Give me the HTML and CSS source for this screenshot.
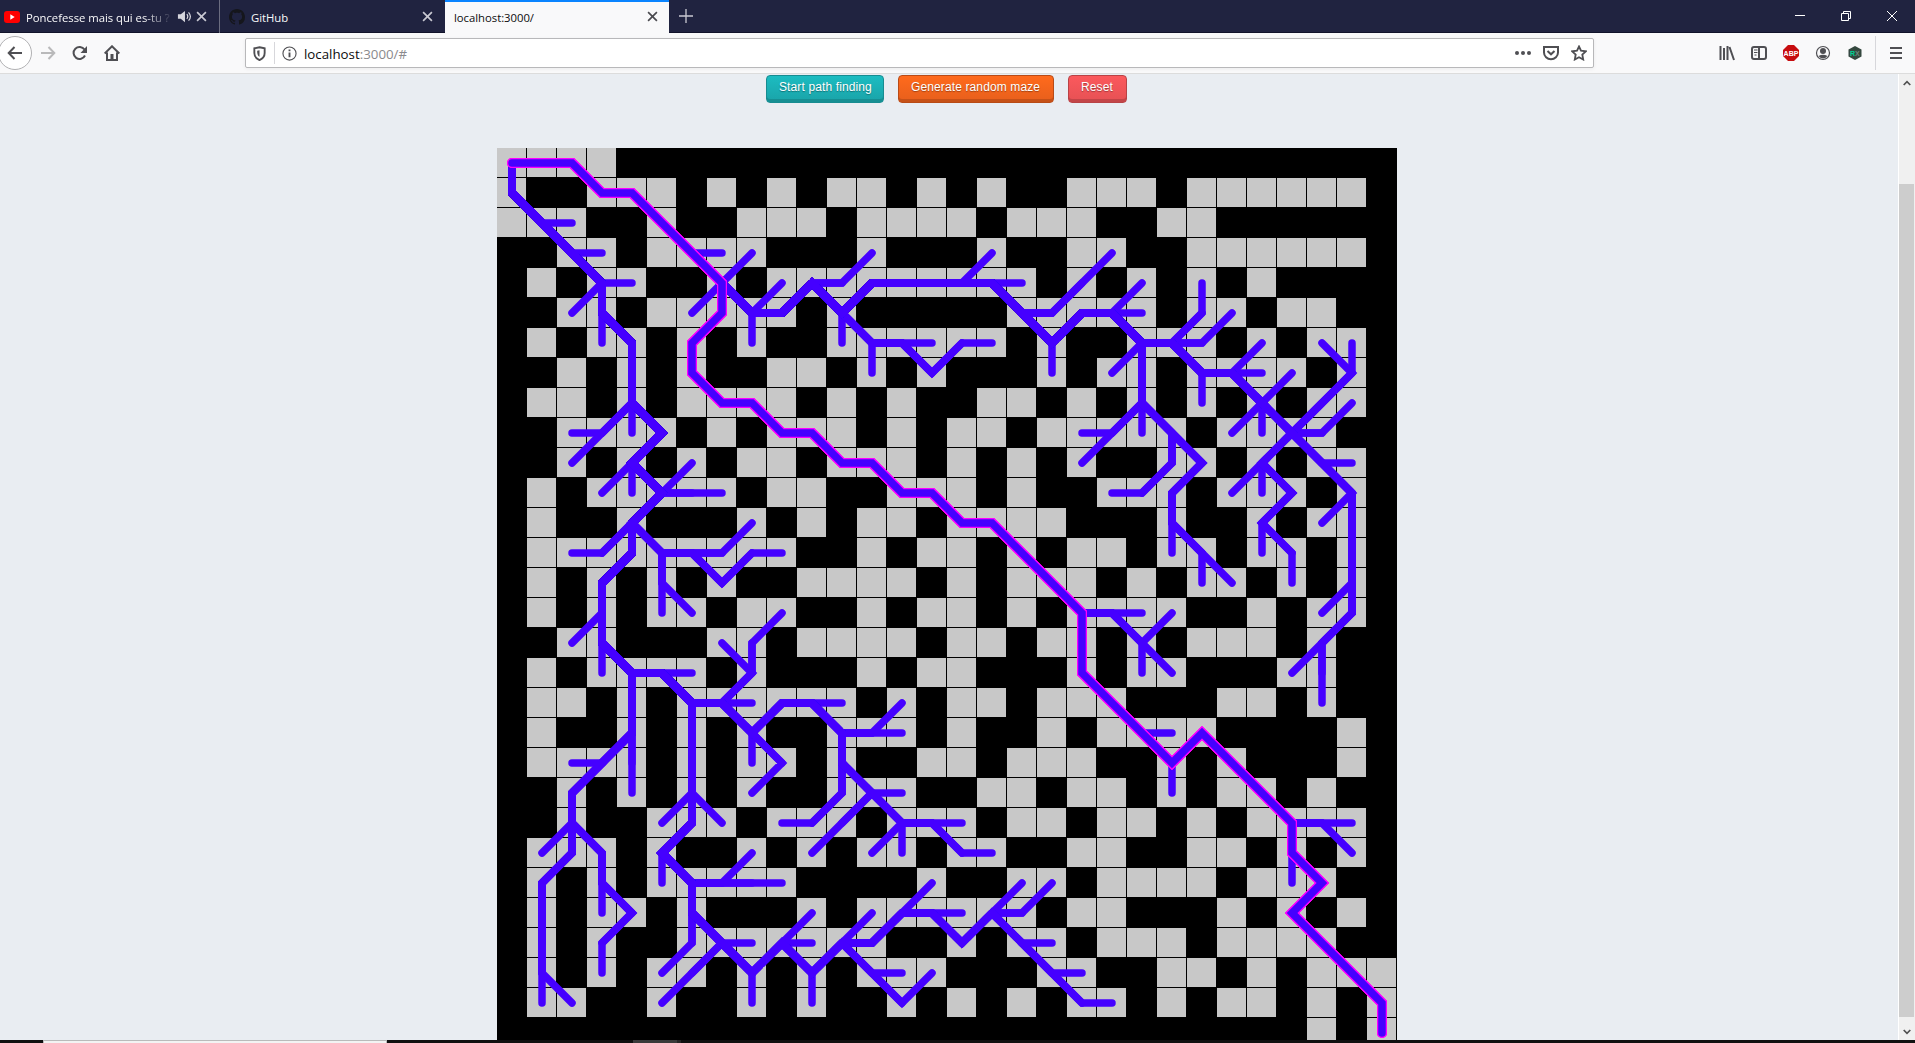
FILE: index.html
```html
<!DOCTYPE html>
<html lang="en">
<head>
<meta charset="utf-8">
<title>localhost:3000/</title>
<link rel="stylesheet" href="styles.css">
</head>
<body>
<header class="tabs">
  <div class="tab tab-first">
    <svg class="fav" viewBox="0 0 16 16"><rect y="2" width="16" height="12" rx="3" fill="#f00"/><path d="M6.3 5.2v5.6l4.4-2.8z" fill="#fff"/></svg>
    <span class="title fade">Poncefesse mais qui es-tu ?</span>
    <svg class="sound" viewBox="0 0 16 16"><path d="M1 5.5h3L8.500 2v12L4 10.500H1z" fill="#d5d5dc"/><path d="M10.500 5.500q2 2.500 0 5M12.300 3.500q4 4.500 0 9" fill="none" stroke="#d5d5dc" stroke-width="1.300"/></svg>
    <svg class="close" viewBox="0 0 10 10"><path d="M1 1l8 8M9 1l-8 8"/></svg>
  </div>
  <div class="tab tab-github">
    <svg class="fav" viewBox="0 0 16 16"><path fill="#15161c" d="M8 0C3.580 0 0 3.580 0 8c0 3.540 2.290 6.530 5.470 7.590.4.070.55-.17.55-.38 0-.19-.01-.82-.01-1.490-2.010.37-2.530-.49-2.690-.94-.09-.23-.48-.94-.82-1.130-.28-.15-.68-.52-.01-.53.63-.01 1.080.58 1.230.82.72 1.210 1.870.87 2.330.66.070-.52.28-.87.51-1.070-1.780-.2-3.640-.89-3.640-3.950 0-.87.31-1.590.82-2.150-.08-.2-.36-1.020.08-2.120 0 0 .67-.21 2.200.82.64-.18 1.320-.27 2-.27s1.360.09 2 .27c1.530-1.040 2.200-.82 2.200-.82.44 1.100.16 1.920.08 2.120.51.56.82 1.270.82 2.150 0 3.070-1.870 3.750-3.650 3.950.29.25.54.73.54 1.480 0 1.070-.01 1.930-.01 2.200 0 .21.15.46.55.38A8.010 8.010 0 0 0 16 8c0-4.420-3.580-8-8-8z"/></svg>
    <span class="title">GitHub</span>
    <svg class="close" viewBox="0 0 10 10"><path d="M1 1l8 8M9 1l-8 8"/></svg>
  </div>
  <div class="tab tab-active">
    <span class="title">localhost:3000/</span>
    <svg class="close" viewBox="0 0 10 10"><path d="M1 1l8 8M9 1l-8 8"/></svg>
  </div>
  <svg class="plus" viewBox="0 0 14 14"><path d="M7 0v14M0 7h14"/></svg>
  <div class="window-controls">
    <svg viewBox="0 0 10 10"><path d="M0 4.500h10"/></svg>
    <svg viewBox="0 0 10 10"><path d="M.5 2.500h7v7h-7zM2.500 2.500v-2h7v7h-2"/></svg>
    <svg viewBox="0 0 10 10"><path d="M0 0l10 10M10 0L0 10"/></svg>
  </div>
</header>

<nav class="toolbar">
  <div class="nav-buttons">
    <span class="back"><svg viewBox="0 0 16 16"><path d="M15 8H2M7.500 2L1.700 8l5.800 6"/></svg></span>
    <svg class="forward" viewBox="0 0 16 16"><path d="M1 8h13M8.500 2l5.800 6-5.800 6"/></svg>
    <svg viewBox="0 0 16 16"><path d="M13 10.500A6 6 0 1 1 12.500 4.500"/><path class="solid" d="M15 1v7H8.500z"/></svg>
    <svg viewBox="0 0 16 16"><path d="M.7 8.500L8 1.300l7.300 7.200M3 7.500V14.900h10V7.500"/><path class="solid" d="M6.500 9h3v6h-3z"/></svg>
  </div>
  <div class="urlbar">
    <svg class="shield" viewBox="0 0 16 16"><path d="M8 1.300L13.500 2.500v5c0 4-2 6-5.500 7.500-3.500-1.500-5.500-3.500-5.500-7.500v-5z"/><path d="M8 4.500v7c-2-1.200-2.500-3-2.500-6.500z" class="solid"/></svg>
    <i class="divider"></i>
    <svg class="info" viewBox="0 0 16 16"><circle cx="8" cy="8" r="7"/><path d="M8 7v5M8 3.800v1.800" stroke-width="2"/></svg>
    <span class="url">localhost<span>:3000/#</span></span>
    <svg class="dots" viewBox="0 0 16 16"><g class="solid"><circle cx="2" cy="8" r="2"/><circle cx="8" cy="8" r="2"/><circle cx="14" cy="8" r="2"/></g></svg>
    <svg class="pocket" viewBox="0 0 16 16"><path d="M1 2h14v5.500a7 6.700 0 0 1-14 0zM4.500 6L8 9.300 11.500 6" stroke-width="2"/></svg>
    <svg class="star" viewBox="0 0 16 16"><path stroke-width="1.800" d="M8 1.500l2 4.200 4.800.6-3.500 3.200.9 5L8 12.200l-4.200 2.300.9-5L1.200 6.300 6 5.700z"/></svg>
  </div>
  <div class="extensions">
    <svg viewBox="0 0 16 16"><path stroke-width="2" d="M1.500 1v14M5 3v12M8.500 1v14M10.500 2l4.500 13"/></svg>
    <svg viewBox="0 0 16 16"><rect x="1" y="2" width="14" height="12" rx="2" stroke-width="2"/><path d="M8 2v12"/><path stroke-width="1" d="M3 5h3.500M3 7.500h3.500M3.500 10h2"/></svg>
    <svg viewBox="0 0 16 16"><path fill="#c70d0f" stroke="none" d="M5 0h6l5 5v6l-5 5H5l-5-5V5z"/><text class="abp" x="8" y="10.700">ABP</text></svg>
    <svg viewBox="0 0 16 16"><circle cx="8" cy="8" r="6.500" stroke-width="1.200"/><circle class="solid" cx="8" cy="6" r="3"/><path class="solid" d="M3.500 11q4.500-2.500 9 0-4.500 5-9 0z"/></svg>
    <svg viewBox="0 0 16 16"><path fill="#35483f" stroke="none" d="M8 1l6.500 3.500v7L8 15l-6.500-3.500v-7z"/><text class="rx" x="7.800" y="10.500"><tspan fill="#00d596">R</tspan><tspan fill="#6c8a7e">X</tspan></text></svg>
  </div>
  <svg class="menu" viewBox="0 0 16 16"><path d="M2 3h12M2 8h12M2 13h12"/></svg>
</nav>

<div class="viewport">
  <main class="page">
    <div class="actions">
      <a class="btn teal">Start path finding</a>
      <a class="btn orange">Generate random maze</a>
      <a class="btn red">Reset</a>
    </div>
    <svg class="maze" id="maze" width="900" height="892" viewBox="0 0 900 892"></svg>
  </main>
  <aside class="scrollbar">
    <svg viewBox="0 0 8 6"><path d="M.7 5L4 1.700 7.300 5"/></svg>
    <div class="thumb"></div>
    <svg viewBox="0 0 8 6"><path d="M.7 1L4 4.300 7.300 1"/></svg>
  </aside>
</div>
<footer class="taskbar"><i class="search"></i><i class="app"></i></footer>
<script src="maze.js"></script>
</body>
</html>
```
FILE: styles.css
```css
* { box-sizing: border-box; }
body {
  margin: 0;
  height: 1043px;
  overflow: hidden;
  display: flex;
  flex-direction: column;
  background: #e9edf2;
  font-family: "Open Sans", "Noto Sans", sans-serif;
  font-size: 12px;
}
svg { display: block; flex: none; fill: none; }
.tabs {
  height: 33px;
  flex: none;
  display: flex;
  background: #202340;
  border-bottom: 1px solid #11132a;
  color: #f9f9fa;
}
.tab { display: flex; align-items: center; height: 33px; }
.tab-first { width: 220px; border-right: 1px solid #6b6d80; padding-left: 4px; }
.tab-github { width: 225px; padding: 0 12px 0 9px; }
.tab-active {
  width: 224px;
  padding: 0 11px 0 9px;
  background: #f9f9fa;
  border-top: 2px solid #0a84ff;
  color: #0c0c0d;
}
.tab-active .title { margin-top: -3px; }
.fav { width: 16px; height: 16px; margin-right: 6px; }
.title { flex: 1; white-space: nowrap; overflow: hidden; font-size: 11.3px; letter-spacing: -.02px; padding-top: 2px; }
.fade {
  flex: 0 0 147px;
  -webkit-mask-image: linear-gradient(90deg, #000 80%, transparent);
  mask-image: linear-gradient(90deg, #000 80%, transparent);
}
.sound { width: 15px; height: 15px; margin: 0 4px 0 4px; }
.close { width: 11px; height: 11px; stroke: #c9c9d2; stroke-width: 1.5; }
.tab-active .close { stroke: #4a4a4f; margin-top: -2px; }
.plus { width: 14px; height: 14px; margin: 9px 0 0 10px; stroke: #c9c9d2; stroke-width: 1.3; }
.window-controls { display: flex; gap: 36px; margin: 11px 18px 0 auto; }
.window-controls svg { width: 10px; height: 10px; stroke: #fff; stroke-width: 1; }

.toolbar {
  height: 41px;
  flex: none;
  display: flex;
  align-items: center;
  background: #f9f9fa;
  border-bottom: 1px solid #dcdcdc;
}
.toolbar svg { width: 16px; height: 16px; stroke: #4f4f53; stroke-width: 2; }
.toolbar .solid { fill: #4f4f53; stroke: none; }
.nav-buttons { display: flex; align-items: center; gap: 16px; width: 245px; margin-left: -2px; }
.back {
  display: grid;
  place-items: center;
  width: 34px;
  height: 34px;
  margin-right: -8px;
  border: 1px solid #b1b1b3;
  border-radius: 50%;
  background: #fff;
}
.toolbar .forward { stroke: #b9b9ba; }
.urlbar {
  width: 1349px;
  height: 30px;
  margin-left: 2px;
  display: flex;
  align-items: center;
  background: #fff;
  border: 1px solid #b8b8ba;
  border-radius: 2px;
  box-shadow: 0 1px 4px rgba(0, 0, 0, .06);
}
.urlbar .shield { width: 15px; height: 15px; margin-left: 6px; }
.divider { width: 1px; height: 22px; margin: 0 7px; background: #d7d7db; }
.urlbar .info { width: 15px; height: 15px; stroke-width: 1.2; }
.url { flex: 1; margin-left: 7px; padding-top: 2px; font-size: 13.3px; color: #0c0c0d; }
.url span { color: #8a8a8d; }
.urlbar .pocket { margin: 0 12px; }
.urlbar .star { margin-right: 6px; }
.extensions { display: flex; gap: 16px; margin-left: 125px; padding-right: 12px; border-right: 1px solid #d7d7db; height: 34px; align-items: center; }
.toolbar .menu { margin-left: 12px; }
.extensions text { stroke: none; text-anchor: middle; font-family: "Liberation Sans", sans-serif; font-weight: bold; font-size: 7px; fill: #fff; }

.viewport { flex: 1; min-height: 0; display: flex; }
.page { flex: 1; padding-left: 497px; }
.actions { display: flex; gap: 14px; padding: 1px 0 0 269px; height: 74px; }
.btn {
  height: 28px;
  padding: 4px 12px 0;
  border: 1px solid;
  border-radius: 4px;
  color: #fff;
  font: 12px/14px "Liberation Sans", sans-serif;
  letter-spacing: .12px;
  text-shadow: 0 1px 1px rgba(0, 0, 0, .35);
  white-space: nowrap;
}
.teal { width: 118px; background: linear-gradient(#1cbcc1, #1aa3a8); border-color: #178c91; box-shadow: inset 0 -3px #168f93; }
.orange { width: 156px; background: linear-gradient(#ff6a1c, #e75f1c); border-color: #b84b17; box-shadow: inset 0 -3px #c65118; }
.red { width: 59px; background: linear-gradient(#fb595d, #e65154); border-color: #b84346; box-shadow: inset 0 -3px #c34548; }
.maze { background: #000; }
.node { fill: #c8c8c8; }
.branch, .route, .route-edge { stroke: #4500ff; stroke-width: 7.5; stroke-linecap: round; stroke-miterlimit: 10; fill: none; }
.route-edge { stroke: #ff00ff; stroke-width: 10; }

.scrollbar {
  width: 17px;
  flex: none;
  display: flex;
  flex-direction: column;
  align-items: center;
  background: #f0f0f0;
  border-left: 1px solid #fff;
  padding: 6px 1px 5px 0;
}
.scrollbar svg { width: 8px; height: 6px; stroke: #505050; stroke-width: 1.7; }
.thumb { width: 15px; flex: 1; margin: 98px 0 12px; background: #cdcdcd; }
.taskbar { height: 3px; flex: none; display: flex; background: #101010; }
.search { width: 344px; margin-left: 43px; background: #f3f3f3; border: 1px solid #bababa; border-bottom: 0; }
.app { width: 48px; margin-left: 246px; background: #3a3a3a; border-right: 4px solid #262626; }
```
FILE: maze.js
```js
// Open columns of each row; everything else is a wall.
const rows = [
  "0-3",
  "0 3-5 7 9 11 12 14 16 19-21 23-28",
  "0-2 5 8-10 12-15 17-19 22 23",
  "2 3 5-8 12 16 19 20 23-28",
  "1 3 4 7 9-17 19 21 23 25",
  "2 3 5-9 11 17-21 23 24 26 27",
  "1 3 4 6 8 11-16 18 21-23 25 27 28",
  "2 4 6 9 10 12 14 18 20 21 23-26 28",
  "1 2 4 6-9 11 13 16 17 19 21 23 25 27 28",
  "2-5 7 9-11 13 15 16 18-22 24-27",
  "2 4 6 8 9 11-13 15 17 19 22 23 25 27 28",
  "1 3-7 9 10 13-15 17 20-22 24-26 28",
  "1 4 8 10 12 13 15-18 22 25 27 28",
  "1-9 12 14 15 17 19 20 22 23 25 26 28",
  "1 3 5 7 10-13 15 17-19 21 23 24 26 28",
  "1 3 5 6 8 9 12 14 15 17 19-22 25 27 28",
  "2 3 7 8 10-13 15 16 18 19 21 23-25 27",
  "1 3-6 8 12 14 15 19 21 22 26 27",
  "1 2 4 6-11 13 15 16 18-20 24 25 27",
  "1 4 6 8 11-13 15 18 20-23 28",
  "1-4 6 8 9 11 14 15 17-19 22 24 28",
  "2 4 6 8 11-13 16 17 19 20 22 24 25 27",
  "2 5-7 9-11 13-15 17 18 20 21 23 25-28",
  "1-3 5 8 10 12 13 15 16 19 20 23 24 26 28",
  "1 3 5-9 14 17 18 20-23 25-27",
  "1 3 4 6 10 12-17 19 20 24 26 28",
  "1 3 6-12 15 17 18 20-22 24-27",
  "1 3 5 6 8 10 12-14 18 19 22 23 25 27-29",
  "1 2 5 8 10 13 15 17 19 20 22 24 25 27 29",
  "27 29"
];

// Shortest route, then every explored branch as "col,row" corners.
const route = "0,0 2,0 3,1 4,1 7,4 7,5 6,6 6,7 7,8 8,8 9,9 10,9 11,10 12,10 13,11 14,11 15,12 16,12 19,15 19,17 22,20 23,19 26,22 26,23 27,24 26,25 29,28 29,29";
const branches = `0,0 0,1 3,4 4,4|1,2 2,2|2,3 3,3|3,4 2,5|3,4 3,6|3,5 4,6 4,9|4,8 2,10|3,9 2,9
4,8 5,9 4,10 3,11|4,10 4,11|4,10 5,11 6,10|5,11 7,11|5,11 4,12 3,13 2,13|4,12 5,13 7,13 8,12
6,13 7,14 8,13 9,13|5,13 5,15|5,14 6,15|4,12 4,13 3,14 3,17|3,15 2,16|3,16 4,17 6,17|4,17 4,21
4,19 2,21 2,22 1,23|3,20 2,20|2,22 2,23 1,24 1,28|1,27 2,28|2,22 3,23 3,25|3,24 4,25 3,26 3,27
5,17 6,18 8,18|6,18 6,21 5,22|6,21 7,22|6,21 6,22 5,23 5,24|5,23 6,24 9,24|7,24 8,23|6,24 6,26 5,27
6,25 7,26 8,26|7,26 5,28|7,26 8,27 8,28|8,27 10,25|9,26 10,26|9,26 10,27 10,28|10,27 12,25
11,26 12,26 14,24|13,25 15,25|14,25 15,26 17,24|16,25 17,25 18,24|16,25 19,28 20,28|17,26 18,26|18,27 19,27
11,26 13,28 14,27|12,27 13,27|7,18 8,17 8,16 9,15|8,17 7,16|7,18 8,19 9,18 11,18|10,18 11,19 13,19
12,19 13,18|8,19 8,20|8,19 9,20 8,21|11,19 11,21 10,22 9,22|11,20 13,22|12,21 13,21|12,21 10,23
13,22 15,22|14,22 15,23 16,23|13,22 12,23|13,22 13,23|6,3 7,3|7,4 8,3|7,4 6,5|7,4 8,5 9,4|8,5 8,6
8,5 9,5 10,4 11,4 12,3|10,4 12,6 12,7|11,5 11,6|11,5 12,4 17,4|15,4 16,3|16,4 18,6 18,7|17,5 18,5 20,3
18,6 19,5 21,5|20,5 21,4|20,5 21,6 20,7|21,6 23,6 24,5|22,6 23,5 23,4|22,6 23,7 25,7|24,7 25,6|23,7 23,8
24,7 26,9|25,8 26,7|25,8 24,9|25,8 25,9|26,9 27,9 28,8|26,9 28,7 28,6|28,7 27,6|26,9 24,11|25,10 25,11
25,10 26,11 25,12 25,13|25,12 26,13 26,14|26,9 28,11 27,12|27,10 28,10|28,11 28,15 26,17|28,14 27,15
27,16 27,18|12,6 14,6|13,6 14,7 15,6 16,6|21,6 21,9|21,8 19,10|20,9 19,9|21,8 23,10 22,11 22,13
22,9 22,10 21,11 20,11|22,12 24,14|23,13 23,14|19,15 21,15|20,15 22,17|21,16 22,15|21,16 21,17
21,19 22,19|22,20 22,21|26,22 28,22|27,22 28,23|26,23 26,24`.split(/[|\n]/);

const maze = document.getElementById("maze");
function add(tag, attrs) {
  const el = document.createElementNS("http://www.w3.org/2000/svg", tag);
  for (const key in attrs) el.setAttribute(key, attrs[key]);
  maze.appendChild(el);
}

rows.forEach((row, y) => row.split(" ").forEach(span => {
  const [from, to = from] = span.split("-").map(Number);
  for (let x = from; x <= to; x++) {
    add("rect", { class: "node", x: x * 30, y: y * 30, width: 29, height: 29 });
  }
}));

const paths = { "0,0": ["0,0"] };
function walk(line) {
  const corners = line.trim().split(" ");
  let [x, y] = corners[0].split(",").map(Number);
  for (const corner of corners.slice(1)) {
    const [tx, ty] = corner.split(",").map(Number);
    while (x !== tx || y !== ty) {
      const before = x + "," + y;
      x += Math.sign(tx - x);
      y += Math.sign(ty - y);
      const key = x + "," + y;
      if (!paths[key]) paths[key] = paths[before].concat(key);
    }
  }
}
const toPoints = keys => keys.map(k => k.split(",").map(n => n * 30 + 15).join(",")).join(" ");

walk(route);
branches.forEach(walk);
for (const key in paths) {
  if (paths[key].length > 1) add("polyline", { class: "branch", points: toPoints(paths[key]) });
}
const solution = toPoints(paths["29,29"]);
// Stacked strokes give the outline a solid edge on the diagonals.
for (let i = 0; i < 3; i++) add("polyline", { class: "route-edge", points: solution });
add("polyline", { class: "route", points: solution });
```
